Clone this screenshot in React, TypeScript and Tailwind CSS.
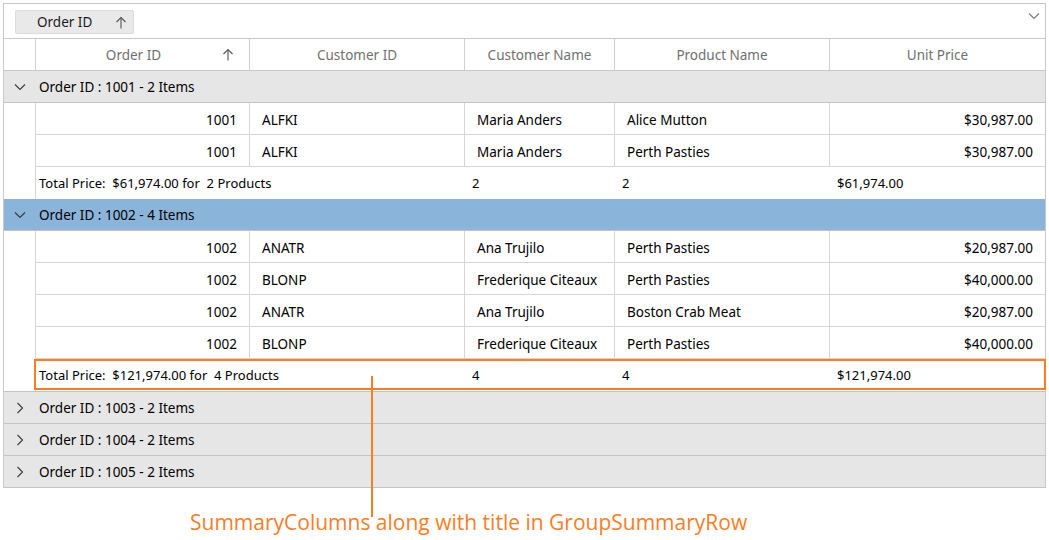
import React from "react";

const font = { fontFamily: '"Noto Sans", "Open Sans", sans-serif' };

const W = ["w-[214px]", "w-[215px]", "w-[150px]", "w-[215px]", "w-[215px]"];

function ArrowUp({ className = "" }: { className?: string }) {
  return (
    <svg width="12" height="13" viewBox="0 0 12 13" className={className} fill="none" stroke="currentColor" strokeWidth="1.1">
      <path d="M6 1.5 V12.5" />
      <path d="M1.5 6 L6 1.5 L10.5 6" />
    </svg>
  );
}

function ChevronDown({ className = "" }: { className?: string }) {
  return (
    <svg width="12" height="8" viewBox="0 0 12 8" className={className} fill="none" stroke="currentColor" strokeWidth="1.1">
      <path d="M1 1.5 L6 6.5 L11 1.5" />
    </svg>
  );
}

function ChevronRight({ className = "" }: { className?: string }) {
  return (
    <svg width="8" height="12" viewBox="0 0 8 12" className={className} fill="none" stroke="currentColor" strokeWidth="1.1">
      <path d="M1.5 1 L6.5 6 L1.5 11" />
    </svg>
  );
}

type Row = [string, string, string, string, string];

function GroupRow({ label, expanded, selected }: { label: string; expanded: boolean; selected?: boolean }) {
  return (
    <div
      className={`flex h-[32px] items-center border-b border-[#c4c4c4] ${selected ? "bg-[#8ab4d9]" : "bg-[#e6e6e6]"}`}
    >
      <div className="flex w-[32px] items-center justify-center pt-[1px] text-[#3a3a3a]">
        {expanded ? <ChevronDown /> : <ChevronRight />}
      </div>
      <div className="pl-[3px] pt-[2px] text-[13.5px] text-black">{label}</div>
    </div>
  );
}

function DataRow({ r }: { r: Row }) {
  return (
    <div className="flex h-[32px]">
      <div className="w-[32px] shrink-0 border-r border-[#d6d6d6]" />
      <div className={`${W[0]} flex items-center justify-end border-b border-r border-[#d6d6d6] pr-[12px] pt-[4px] text-[13.5px]`}>{r[0]}</div>
      <div className={`${W[1]} flex items-center border-b border-r border-[#d6d6d6] pl-[12px] pt-[4px] text-[13.5px]`}>{r[1]}</div>
      <div className={`${W[2]} flex items-center border-b border-r border-[#d6d6d6] pl-[12px] pt-[4px] text-[13.5px]`}>{r[2]}</div>
      <div className={`${W[3]} flex items-center border-b border-r border-[#d6d6d6] pl-[12px] pt-[4px] text-[13.5px]`}>{r[3]}</div>
      <div className={`${W[4]} flex items-center justify-end border-b border-[#d6d6d6] pr-[12px] pt-[4px] text-[13.5px]`}>{r[4]}</div>
    </div>
  );
}

function SummaryRow({ title, c3, c4, c5 }: { title: string; c3: string; c4: string; c5: string }) {
  return (
    <div className="flex h-[32px]">
      <div className="w-[32px] shrink-0 border-r border-[#d6d6d6]" />
      <div className="flex w-[429px] items-center whitespace-pre pl-[3px] pt-[2px] text-[13px]">{title}</div>
      <div className={`${W[2]} flex items-center pl-[7px] pt-[2px] text-[13px]`}>{c3}</div>
      <div className={`${W[3]} flex items-center pl-[7px] pt-[2px] text-[13px]`}>{c4}</div>
      <div className={`${W[4]} flex items-center pl-[7px] pt-[2px] text-[13px]`}>{c5}</div>
    </div>
  );
}

export default function App() {
  const g1: Row[] = [
    ["1001", "ALFKI", "Maria Anders", "Alice Mutton", "$30,987.00"],
    ["1001", "ALFKI", "Maria Anders", "Perth Pasties", "$30,987.00"],
  ];
  const g2: Row[] = [
    ["1002", "ANATR", "Ana Trujilo", "Perth Pasties", "$20,987.00"],
    ["1002", "BLONP", "Frederique Citeaux", "Perth Pasties", "$40,000.00"],
    ["1002", "ANATR", "Ana Trujilo", "Boston Crab Meat", "$20,987.00"],
    ["1002", "BLONP", "Frederique Citeaux", "Perth Pasties", "$40,000.00"],
  ];
  const headers = ["Order ID", "Customer ID", "Customer Name", "Product Name", "Unit Price"];

  return (
    <div className="relative h-[540px] w-[1049px] overflow-hidden bg-white text-black" style={font}>
      <div className="ml-[3px] pt-[3px]">
        <div className="w-[1043px] border border-[#c8c8c8]">
          {/* group drop area */}
          <div className="relative flex h-[35px] items-start border-b border-[#c8c8c8]">
            <div className="ml-[11px] mt-[6px] flex h-[24px] w-[119px] items-center rounded-[2px] border border-[#dcdcdc] bg-[#e9e9e9] pl-[21px] text-[13.5px] text-[#1a1a1a]">
              <span>Order ID</span>
              <ArrowUp className="ml-[23px] text-[#555]" />
            </div>
            <ChevronDown className="absolute right-[5px] top-[8px] text-[#777]" />
          </div>
          {/* header */}
          <div className="flex h-[32px] border-b border-[#c8c8c8] text-[13.5px] text-[#707070]">
            <div className="w-[32px] shrink-0 border-r border-[#d0d0d0]" />
            {headers.map((h, i) => (
              <div
                key={h}
                className={`${W[i]} relative flex items-center justify-center pt-[2px] ${i < 4 ? "border-r border-[#d0d0d0]" : ""}`}
              >
                <span className={i === 0 ? "pr-[18px]" : ""}>{h}</span>
                {i === 0 && <ArrowUp className="absolute right-[15px] top-[9px] text-[#555]" />}
              </div>
            ))}
          </div>
          <GroupRow label="Order ID : 1001 - 2 Items" expanded />
          {g1.map((r, i) => (
            <DataRow key={i} r={r} />
          ))}
          <div className="border-b border-[#c4c4c4]">
            <SummaryRow title="Total Price:  $61,974.00 for  2 Products" c3="2" c4="2" c5="$61,974.00" />
          </div>
          <div className="-mt-px">
            <GroupRow label="Order ID : 1002 - 4 Items" expanded selected />
          </div>
          {g2.map((r, i) => (
            <DataRow key={i} r={r} />
          ))}
          <div className="relative border-b border-[#c4c4c4]">
            <SummaryRow title="Total Price:  $121,974.00 for  4 Products" c3="4" c4="4" c5="$121,974.00" />
            <div className="pointer-events-none absolute left-[30px] top-[0px] h-[31px] w-[1012px] border-2 border-[#fb7d23]" />
          </div>
          <GroupRow label="Order ID : 1003 - 2 Items" expanded={false} />
          <GroupRow label="Order ID : 1004 - 2 Items" expanded={false} />
          <div className="-mb-px">
            <GroupRow label="Order ID : 1005 - 2 Items" expanded={false} />
          </div>
        </div>
      </div>
      {/* annotation */}
      <div className="absolute left-[371px] top-[376px] h-[141px] w-[2px] bg-[#fb7d23]" />
      <div
        className="absolute left-[190px] top-[508px] whitespace-nowrap text-[21px] leading-[28px] text-[#fb7d23]"
        style={{ fontFamily: '"Open Sans", "Noto Sans", sans-serif' }}
      >
        SummaryColumns along with title in GroupSummaryRow
      </div>
    </div>
  );
}
